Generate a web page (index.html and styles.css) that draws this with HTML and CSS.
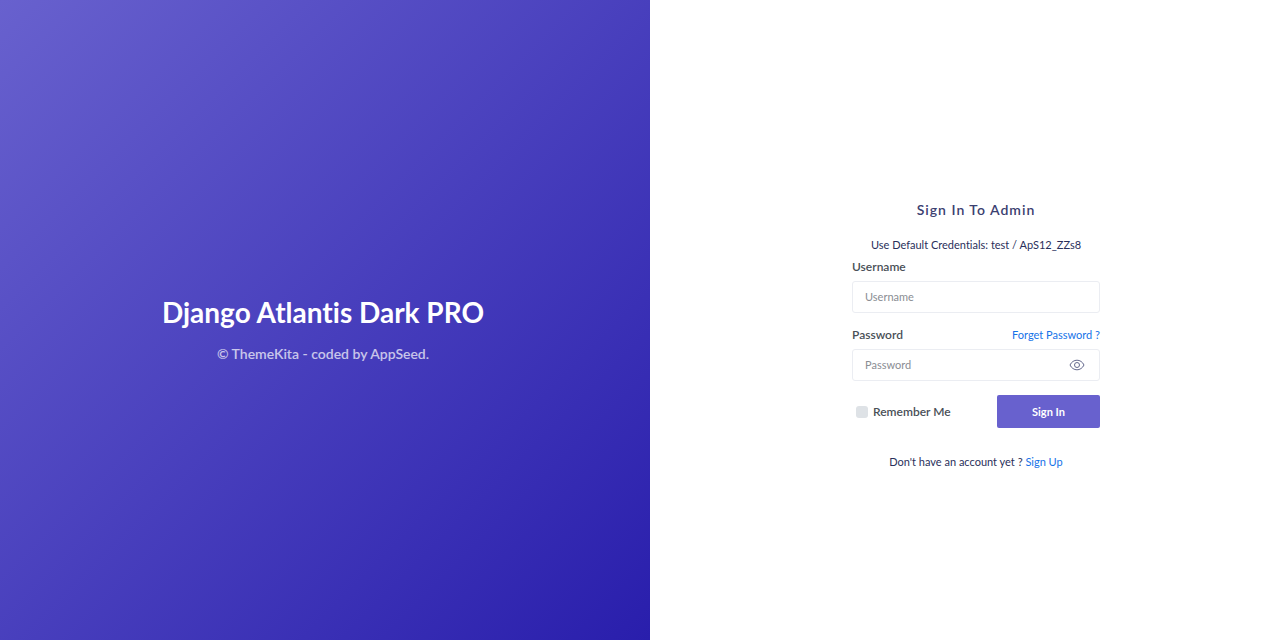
FILE: index.html
```html
<!DOCTYPE html>
<html lang="en">
<head>
<meta charset="utf-8">
<meta name="viewport" content="width=device-width, initial-scale=1">
<title>Sign In - Django Atlantis Dark PRO</title>
<link rel="stylesheet" href="styles.css">
</head>
<body>
<div class="wrapper">
  <section class="aside">
    <h1 class="brand">Django Atlantis Dark PRO</h1>
    <p class="tagline">© ThemeKita - coded by AppSeed.</p>
  </section>
  <main class="panel">
    <form class="login">
      <h2 class="title">Sign In To Admin</h2>
      <p class="hint">Use Default Credentials: test / ApS12_ZZs8</p>
      <div class="field">
        <label class="label" for="username">Username</label>
        <input class="input" id="username" type="text" placeholder="Username">
      </div>
      <div class="field">
        <div class="label-row">
          <label class="label" for="password">Password</label>
          <a class="link" href="#">Forget Password ?</a>
        </div>
        <div class="password">
          <input class="input" id="password" type="password" placeholder="Password">
          <button class="eye" type="button" aria-label="Show password">
            <svg viewBox="0 0 16 12" width="16" height="12" fill="none" stroke="#656a8e"><path d="M1 6C4-.4 12-.4 15 6 12 12.4 4 12.4 1 6Z"/><circle cx="8" cy="6" r="2.5"/></svg>
          </button>
        </div>
      </div>
      <div class="actions">
        <label class="remember"><input class="check" type="checkbox">Remember Me</label>
        <button class="submit" type="submit">Sign In</button>
      </div>
      <p class="signup">Don't have an account yet ? <a class="link" href="#">Sign Up</a></p>
    </form>
  </main>
</div>
</body>
</html>
```
FILE: styles.css
```css
* { box-sizing: border-box; }
body {
  margin: 0;
  font: 400 11px/16px Lato, sans-serif;
  font-variant-ligatures: none;
  color: #2a2f5b;
  background: #fff;
}
h1, h2, p { margin: 0; }
.wrapper { display: flex; min-height: 100vh; }
.aside {
  flex: 0 0 auto;
  width: 650px;
  max-width: 51%;
  display: flex;
  flex-direction: column;
  align-items: center;
  justify-content: center;
  gap: 15px;
  padding: 19px 4px 0 0;
  color: #fff;
  background: linear-gradient(-45deg, #291eac, #6861ce);
}
.brand { font-size: 28px; line-height: 34px; font-weight: 700; }
.tagline { font-size: 14px; line-height: 20px; font-weight: 600; opacity: .7; }
.panel {
  flex: 1;
  display: flex;
  align-items: center;
  justify-content: center;
  padding: 30px 0 0 22px;
}
.login { width: 248px; }
.title {
  font-size: 14px;
  line-height: 20px;
  font-weight: 600;
  letter-spacing: 1px;
  text-align: center;
  color: #3b4070;
}
.hint { margin: 17px 0 6px; text-align: center; }
.field { margin-bottom: 14px; }
.label { display: block; font-size: 12px; font-weight: 600; color: #495057; margin-bottom: 6px; }
.label-row { display: flex; justify-content: space-between; }
.link { color: #1572e8; text-decoration: none; }
.input {
  display: block;
  width: 100%;
  height: 32px;
  padding: 0 12px 1px;
  font: inherit;
  color: #495057;
  background: #fff;
  border: 1px solid #ebedf2;
  border-radius: 3px;
}
.input::placeholder { color: #8a8d93; opacity: 1; }
.password { position: relative; }
.eye {
  position: absolute;
  top: 0;
  right: 15px;
  height: 100%;
  display: flex;
  align-items: center;
  padding: 0;
  border: 0;
  background: none;
}
.actions { display: flex; justify-content: space-between; align-items: center; }
.remember { display: flex; align-items: center; gap: 5px; padding-left: 4px; font-size: 12px; font-weight: 600; color: #495057; }
.check {
  appearance: none;
  width: 12px;
  height: 12px;
  margin: 0;
  border-radius: 3px;
  background: #dee2e6;
}
.submit {
  width: 103px;
  height: 33px;
  border: 0;
  border-radius: 2px;
  color: #fff;
  background: #6861ce;
  font: inherit;
  font-weight: 700;
}
.signup { margin-top: 26px; text-align: center; }
```
